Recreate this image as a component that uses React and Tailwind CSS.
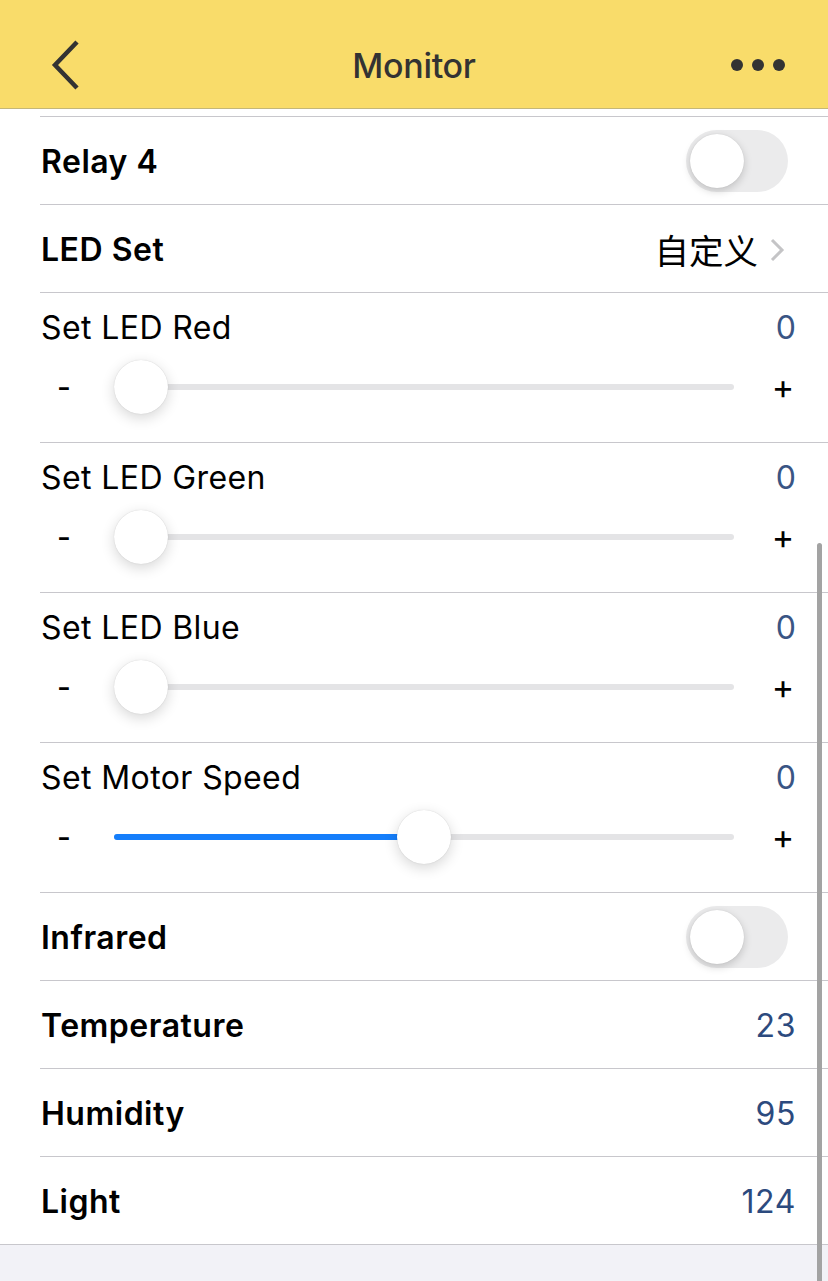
import React from "react";

const font = { fontFamily: "Inter, 'Noto Sans CJK SC', sans-serif" };

function Toggle() {
  return (
    <div className="relative w-[102px] h-[62px] rounded-full bg-[#ebebec]">
      <div className="absolute left-[4px] top-[4px] w-[54px] h-[54px] rounded-full bg-white shadow-[0_3px_8px_rgba(0,0,0,0.18),0_0_1px_rgba(0,0,0,0.15)]" />
    </div>
  );
}

function SimpleRow({ label, right, last }) {
  return (
    <div className={last ? "border-b border-[#c8c7cc]" : "ml-[40px] border-b border-[#c8c7cc]"}>
      <div className={(last ? "pl-[41px] " : "pl-px ") + "h-[87px] flex items-center justify-between pr-[32px]"}>
        <span className="text-[32px] font-semibold text-black tracking-[0.5px] pt-[2px]">{label}</span>
        {right}
      </div>
    </div>
  );
}

function Value({ children }) {
  return <span className="text-[32px] text-[#2c4a7e] tracking-[0.6px] pt-[2px]">{children}</span>;
}

function SliderRow({ label, pct }) {
  return (
    <div className="ml-[40px] border-b border-[#c8c7cc]">
      <div className="h-[149px] pr-[32px] pl-px pt-[17px]">
        <div className="flex items-center justify-between h-[36px]">
          <span className="text-[32px] text-black tracking-[0.4px]">{label}</span>
          <span className="text-[32px] text-[#3a5584]">0</span>
        </div>
        <div className="mt-[13px] h-[56px] flex items-center">
          <div className="w-[48px] text-center text-[30px] font-medium text-black leading-none -ml-px">-</div>
          <div className="relative ml-[26px] w-[620px] h-[6px] rounded-full bg-[#e4e4e6]">
            <div className="absolute left-0 top-0 h-[6px] rounded-full bg-[#157efb]" style={{ width: `${pct}%` }} />
            <div
              className="absolute top-1/2 -translate-y-1/2 w-[54px] h-[54px] rounded-full bg-white shadow-[0_4px_14px_rgba(0,0,0,0.16),0_0_1px_rgba(0,0,0,0.2)]"
              style={{ left: `calc(${pct}% * (566 / 620) )` }}
            />
          </div>
          <div className="ml-[36px] w-[26px] text-center text-[34px] text-black leading-none">+</div>
        </div>
      </div>
    </div>
  );
}

export default function App() {
  return (
    <div className="relative w-[828px] h-[1281px] bg-[#f2f2f7] overflow-hidden" style={font}>
      <div className="h-[109px] bg-[#f9dc6a] border-b border-[#c4b779] grid grid-cols-[1fr_auto_1fr] items-center px-[48px] pt-[22px]">
        <svg width="34" height="52" viewBox="0 0 34 52">
          <path d="M29 3 L7 26 L29 49" fill="none" stroke="#333" strokeWidth="4.5" strokeLinecap="butt" />
        </svg>
        <span className="text-[34px] font-medium text-[#333] tracking-[-0.3px]">Monitor</span>
        <div className="flex gap-[9px] mr-[-5px] justify-self-end">
          <div className="w-[12px] h-[12px] rounded-full bg-[#333]" />
          <div className="w-[12px] h-[12px] rounded-full bg-[#333]" />
          <div className="w-[12px] h-[12px] rounded-full bg-[#333]" />
        </div>
      </div>
      <div className="bg-white">
        <div className="h-[8px] ml-[40px] border-b border-[#c8c7cc]" />
        <SimpleRow label="Relay 4" right={<div className="mr-[8px]"><Toggle /></div>} />
        <SimpleRow
          label="LED Set"
          right={
            <div className="flex items-center gap-[11px] mr-[11px] pt-[2px]">
              <span className="text-[34.5px] text-black" style={{ fontFamily: "'Noto Sans CJK SC', sans-serif" }}>自定义</span>
              <svg width="16" height="26" viewBox="0 0 16 26">
                <path d="M3 3 L13 13 L3 23" fill="none" stroke="#c4c4c6" strokeWidth="3" />
              </svg>
            </div>
          }
        />
        <SliderRow label="Set LED Red" pct={0} />
        <SliderRow label="Set LED Green" pct={0} />
        <SliderRow label="Set LED Blue" pct={0} />
        <SliderRow label="Set Motor Speed" pct={50} />
        <SimpleRow label="Infrared" right={<div className="mr-[8px]"><Toggle /></div>} />
        <SimpleRow label="Temperature" right={<Value>23</Value>} />
        <SimpleRow label="Humidity" right={<Value>95</Value>} />
        <SimpleRow label="Light" right={<Value>124</Value>} last />
      </div>
      <div className="absolute right-[6px] top-[543px] bottom-0 w-[5px] bg-[#a3a3a3] rounded-t-full" />
    </div>
  );
}
